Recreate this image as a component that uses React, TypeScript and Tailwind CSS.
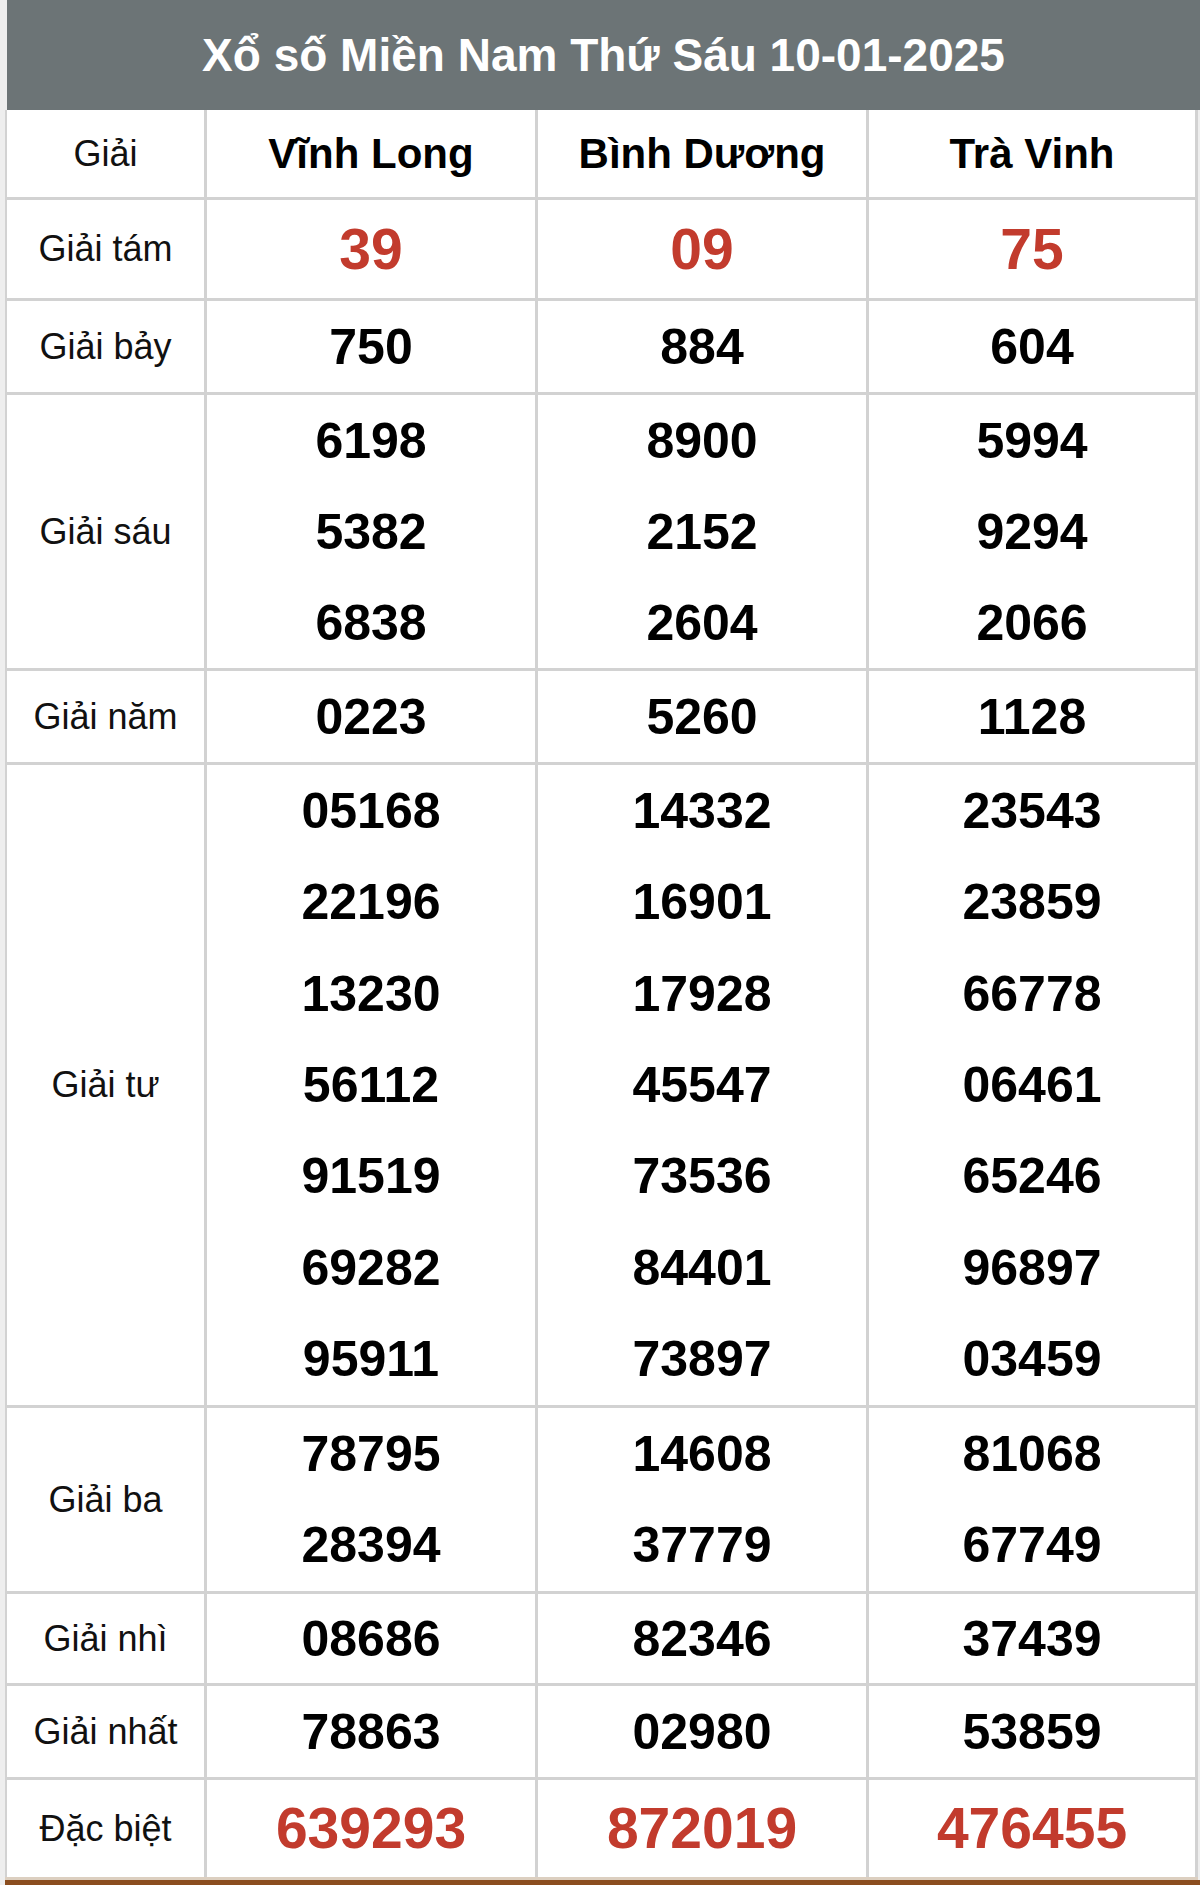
import React from "react";

type Row = {
  label: string;
  values: string[][];
  red?: boolean;
  height: string;
};

const provinces = ["Vĩnh Long", "Bình Dương", "Trà Vinh"];

const rows: Row[] = [
  { label: "Giải tám", values: [["39"], ["09"], ["75"]], red: true, height: "h-[98px]" },
  { label: "Giải bảy", values: [["750"], ["884"], ["604"]], height: "h-[91px]" },
  {
    label: "Giải sáu",
    values: [
      ["6198", "5382", "6838"],
      ["8900", "2152", "2604"],
      ["5994", "9294", "2066"],
    ],
    height: "h-[273px]",
  },
  { label: "Giải năm", values: [["0223"], ["5260"], ["1128"]], height: "h-[91px]" },
  {
    label: "Giải tư",
    values: [
      ["05168", "22196", "13230", "56112", "91519", "69282", "95911"],
      ["14332", "16901", "17928", "45547", "73536", "84401", "73897"],
      ["23543", "23859", "66778", "06461", "65246", "96897", "03459"],
    ],
    height: "h-[640px]",
  },
  {
    label: "Giải ba",
    values: [
      ["78795", "28394"],
      ["14608", "37779"],
      ["81068", "67749"],
    ],
    height: "h-[183px]",
  },
  { label: "Giải nhì", values: [["08686"], ["82346"], ["37439"]], height: "h-[89px]" },
  { label: "Giải nhất", values: [["78863"], ["02980"], ["53859"]], height: "h-[91px]" },
  { label: "Đặc biệt", values: [["639293"], ["872019"], ["476455"]], red: true, height: "h-[97px]" },
];

function ResultRow({ row }: { row: Row }) {
  return (
    <>
      <div className={`${row.height} bg-white flex items-center justify-center text-[36px] text-[#111]`}>
        {row.label}
      </div>
      {row.values.map((col, i) => (
        <div key={i} className={`${row.height} bg-white flex flex-col`}>
          {col.map((num) => (
            <div
              key={num}
              className={
                row.red
                  ? "flex-1 flex items-center justify-center font-bold text-[57px] leading-none text-[#c23b2d]"
                  : "flex-1 flex items-center justify-center font-bold text-[50px] leading-none text-black"
              }
            >
              {num}
            </div>
          ))}
        </div>
      ))}
    </>
  );
}

export default function App() {
  return (
    <div className="w-[1200px] h-[1885px] bg-[#eeeeee] pl-[5px] font-['Liberation_Sans',Arial,sans-serif]">
      <div className="ml-[2px] w-[1193px] h-[110px] bg-[#6c7476] flex items-center justify-center text-white font-bold text-[46px]">
        Xổ số Miền Nam Thứ Sáu 10-01-2025
      </div>

      <div className="w-[1193px] bg-[#d2d2d2] pl-[2px] pr-[3px] grid grid-cols-[197px_328px_328px_326px] gap-[3px]">
        <div className="h-[87px] bg-white flex items-center justify-center text-[36px] text-[#111]">
          Giải
        </div>
        {provinces.map((p) => (
          <div key={p} className="h-[87px] bg-white flex items-center justify-center font-bold text-[42px] text-black">
            {p}
          </div>
        ))}
        {rows.map((row) => (
          <ResultRow key={row.label} row={row} />
        ))}
      </div>

      <div className="w-[1193px] h-[3px] bg-[#dccfc0]" />
      <div className="w-[1195px] h-[5px] bg-[#8b4d1f]" />
    </div>
  );
}
